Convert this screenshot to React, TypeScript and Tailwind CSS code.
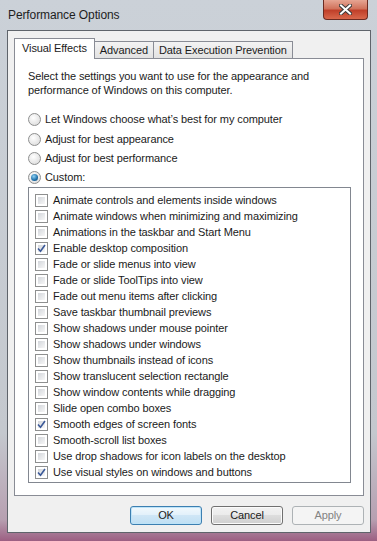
import React from 'react'

const font = "font-['Liberation_Sans',Arial,sans-serif]"

const effects: [string, boolean][] = [
  ['Animate controls and elements inside windows', false],
  ['Animate windows when minimizing and maximizing', false],
  ['Animations in the taskbar and Start Menu', false],
  ['Enable desktop composition', true],
  ['Fade or slide menus into view', false],
  ['Fade or slide ToolTips into view', false],
  ['Fade out menu items after clicking', false],
  ['Save taskbar thumbnail previews', false],
  ['Show shadows under mouse pointer', false],
  ['Show shadows under windows', false],
  ['Show thumbnails instead of icons', false],
  ['Show translucent selection rectangle', false],
  ['Show window contents while dragging', false],
  ['Slide open combo boxes', false],
  ['Smooth edges of screen fonts', true],
  ['Smooth-scroll list boxes', false],
  ['Use drop shadows for icon labels on the desktop', false],
  ['Use visual styles on windows and buttons', true],
]

function Radio({ checked }: { checked?: boolean }) {
  return (
    <span className="flex h-[13px] w-[13px] shrink-0 items-center justify-center rounded-full border border-[#8e8f8f] bg-[radial-gradient(circle_at_40%_35%,#ffffff,#d6d6d6)]">
      {checked && (
        <span className="h-[7px] w-[7px] rounded-full bg-[radial-gradient(circle_at_40%_35%,#8fd2f5,#1c6ea8_60%,#0c3f6b)]" />
      )}
    </span>
  )
}

function Checkbox({ checked }: { checked?: boolean }) {
  return (
    <span className="flex h-[13px] w-[13px] shrink-0 items-center justify-center border border-[#8e8f8f] bg-white p-[2px]">
      <span className="relative flex h-full w-full items-center justify-center bg-[linear-gradient(135deg,#d3d6db,#f7f7f7)]">
        {checked && (
          <svg width="9" height="9" viewBox="0 0 9 9" className="absolute">
            <path d="M1 4.5 L3.5 7.2 L8 1" fill="none" stroke="#3b5998" strokeWidth="1.6" />
          </svg>
        )}
      </span>
    </span>
  )
}

function Tab({ label, active }: { label: string; active?: boolean }) {
  if (active) {
    return (
      <div className="relative z-10 -mb-px flex h-[21px] items-center border border-b-0 border-[#898c95] bg-white px-[7px] pb-[2px]">
        {label}
      </div>
    )
  }
  return (
    <div className="-ml-px flex h-[17px] items-center self-end border border-b-0 border-[#898c95] bg-[linear-gradient(#f3f3f3,#e2e2e2)] px-[5px]">
      {label}
    </div>
  )
}

export default function App() {
  return (
    <div
      className={`${font} flex h-[541px] w-[377px] flex-col overflow-hidden bg-[linear-gradient(#cbd1d8,#c4c8ce_80%,#b7a0b1_96%,#9c5f82)] text-[11px] tracking-[-0.1px] text-[#1b1b1b]`}
    >
      {/* Title bar */}
      <div className="flex h-[30px] shrink-0 items-start">
        <span className="ml-[8px] mt-[6px] text-[12px] leading-[18px] text-[#1e1e1e]">Performance Options</span>
        <div className="ml-auto mr-[9px] flex h-[20px] w-[45px] items-center justify-center rounded-b-[4px] border border-t-0 border-[#6b2b22] bg-[linear-gradient(#e6a593,#d1735c_45%,#c0402a_55%,#d9684c)]">
          <svg width="13" height="11" viewBox="0 0 13 11">
            <path d="M2 1.5 L11 9.5 M11 1.5 L2 9.5" stroke="#3b3b3b" strokeWidth="4" strokeLinecap="square" />
            <path d="M2 1.5 L11 9.5 M11 1.5 L2 9.5" stroke="#ffffff" strokeWidth="2" strokeLinecap="square" />
          </svg>
        </div>
      </div>

      {/* Client area */}
      <div className="ml-[7px] mr-[6px] mb-[8px] flex flex-1 flex-col border border-[#5f646b] bg-[#f0f0f0] px-[6px] pt-[6px]">
        {/* Tabs */}
        <div className="flex h-[21px] items-end">
          <Tab label="Visual Effects" active />
          <Tab label="Advanced" />
          <Tab label="Data Execution Prevention" />
        </div>

        {/* Panel */}
        <div className="flex h-[438px] flex-col border border-[#898c95] bg-white pl-[13px] pr-[12px] pt-[10px]">
          <p className="whitespace-nowrap leading-[14px]">
            Select the settings you want to use for the appearance and
            <br />
            performance of Windows on this computer.
          </p>

          <div className="mt-[12px] flex flex-col">
            {[
              ['Let Windows choose what\u2019s best for my computer', false, 'h-[20px]'],
              ['Adjust for best appearance', false, 'h-[20px]'],
              ['Adjust for best performance', false, 'h-[19px]'],
              ['Custom:', true, 'h-[19px]'],
            ].map(([label, checked, h]) => (
              <div key={label as string} className={`flex items-center gap-[4px] ${h}`}>
                <Radio checked={checked as boolean} />
                <span>{label as string}</span>
              </div>
            ))}
          </div>

          <div className="flex h-[296px] flex-col border border-[#828790] bg-white pl-[6px] pt-[4px]">
            {effects.map(([label, checked]) => (
              <div key={label} className="flex h-[16px] items-center gap-[5px]">
                <Checkbox checked={checked} />
                <span className="leading-[16px]">{label}</span>
              </div>
            ))}
          </div>
        </div>

        {/* Buttons */}
        <div className="mt-[10px] flex justify-end gap-[9px]">
          <button className="h-[19px] w-[72px] rounded-[3px] border border-[#3c7fb1] bg-[linear-gradient(#f2f9fd,#e1f0fa_50%,#cfe6f6_50%,#bfdff3)] leading-[17px] shadow-[inset_0_0_0_1px_#bde3f8]">
            OK
          </button>
          <button className="h-[19px] w-[72px] rounded-[3px] border border-[#707070] bg-[linear-gradient(#f2f2f2,#ebebeb_50%,#dddddd_50%,#cfcfcf)] leading-[17px] shadow-[inset_0_0_0_1px_#fbfbfb]">
            Cancel
          </button>
          <button className="h-[19px] w-[72px] rounded-[3px] border border-[#adb2b5] bg-[#f4f4f4] leading-[17px] text-[#838383]">
            Apply
          </button>
        </div>
      </div>
    </div>
  )
}
